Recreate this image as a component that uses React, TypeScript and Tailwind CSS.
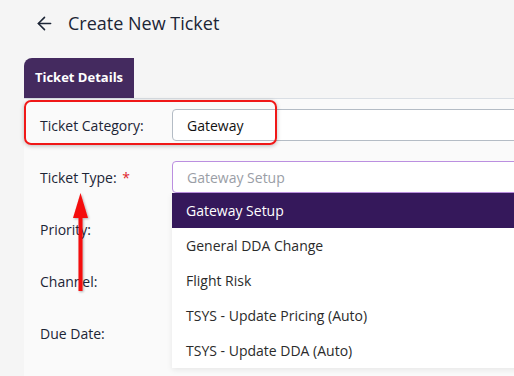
import { ArrowLeft } from "lucide-react"

const rows = ["Priority:", "Channel:", "Due Date:"]
const options = [
  "Gateway Setup",
  "General DDA Change",
  "Flight Risk",
  "TSYS - Update Pricing (Auto)",
  "TSYS - Update DDA (Auto)",
]

export default function App() {
  return (
    <main className="relative w-[514px] h-[376px] overflow-hidden bg-[#f5f5f5] flex flex-col font-['Open_Sans',sans-serif] text-[#1c2536]">
      {/* Header */}
      <header className="h-[46px] flex items-center pl-[34px] gap-[13px]">
        <ArrowLeft className="w-[21px] h-[21px]" strokeWidth={1.8} />
        <h1 className="text-[18px] leading-none">Create New Ticket</h1>
      </header>

      {/* Tab */}
      <div className="mt-[12px] ml-[24px] w-[110px] h-[40px] rounded-tl-[8px] bg-[#442a5f] text-white text-[13px] font-bold flex items-center justify-center">
        Ticket Details
      </div>

      {/* Form panel */}
      <section className="ml-[24px] flex-1 border-t border-[#d9dee4] bg-[#fafafa] pt-[10px] pl-[16px] flex flex-col gap-[20px]">
        <div className="flex items-center h-[32px]">
          <span className="w-[132px] shrink-0 text-[14px]">Ticket Category:</span>
          <div className="w-[400px] shrink-0 h-[32px] border border-[#b4bcc5] rounded-l-[4px] bg-white flex items-center pl-[14px] text-[14px] text-[#111]">
            Gateway
          </div>
        </div>
        <div className="flex items-center h-[32px]">
          <span className="w-[132px] shrink-0 text-[14px]">
            Ticket Type: <span className="text-[#e0242b] ml-[2px]">*</span>
          </span>
          <div className="w-[400px] shrink-0 h-[32px] border border-[#bb8fe0] rounded-l-[4px] bg-white flex items-center pl-[14px] text-[14px] text-[#9a9ea6]">
            Gateway Setup
          </div>
        </div>
        {rows.map((r) => (
          <div key={r} className="flex items-center h-[32px]">
            <span className="w-[132px] shrink-0 text-[14px]">{r}</span>
          </div>
        ))}
      </section>

      {/* Dropdown menu */}
      <ul className="absolute left-[172px] top-[193px] w-[400px] bg-white shadow-[0_2px_6px_rgba(0,0,0,0.08)]">
        {options.map((o, i) => (
          <li
            key={o}
            className={
              i === 0
                ? "h-[35px] flex items-center pl-[14px] text-[14px] bg-[#35185b] text-white"
                : "h-[35px] flex items-center pl-[14px] text-[14px] text-[#2b2b2b]"
            }
          >
            {o}
          </li>
        ))}
      </ul>

      {/* Annotation box */}
      <div className="absolute left-[24px] top-[100px] w-[253px] h-[45px] border-2 border-[#f01818] rounded-[7px] shadow-[0_1px_4px_rgba(0,0,0,0.25)]" />

      {/* Annotation arrow */}
      <svg className="absolute left-[70px] top-[190px]" width="22" height="104" viewBox="0 0 22 104">
        <defs>
          <filter id="sh" x="-50%" y="-20%" width="200%" height="140%">
            <feDropShadow dx="1" dy="1" stdDeviation="1.2" floodColor="#000" floodOpacity="0.3" />
          </filter>
        </defs>
        <g filter="url(#sh)" fill="#f40b0b">
          <polygon points="10.5,3 18,28 3,28" />
          <rect x="8.5" y="26" width="4" height="75" />
        </g>
      </svg>
    </main>
  )
}
